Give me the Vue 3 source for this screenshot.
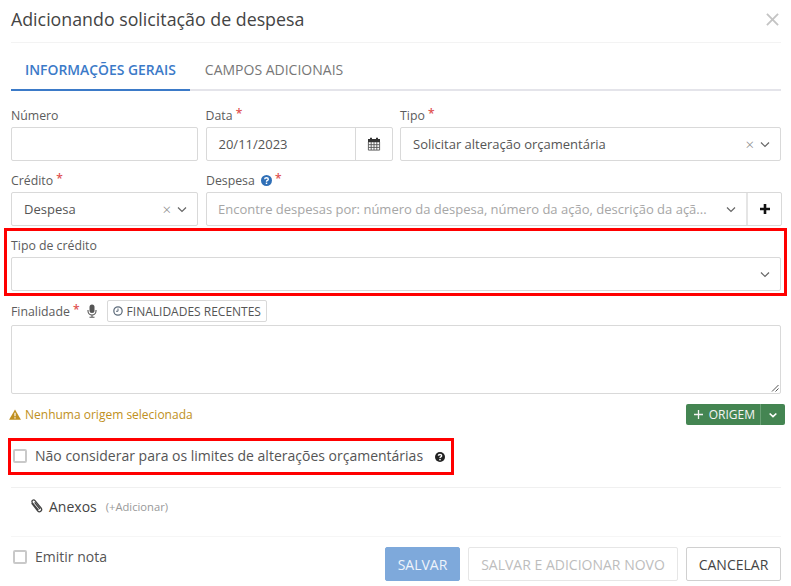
<script setup>
const chevron = "M2 4.5 L6 8.5 L10 4.5";
</script>

<template>
  <div class="modal">
    <header class="head">
      <h1>Adicionando solicitação de despesa</h1>
      <svg class="close" viewBox="0 0 14 14" width="13" height="13">
        <path d="M1 1 L13 13 M13 1 L1 13" stroke="#c4c4c4" stroke-width="2" fill="none" />
      </svg>
    </header>

    <nav class="tabs">
      <a class="tab active">INFORMAÇÕES GERAIS</a>
      <a class="tab">CAMPOS ADICIONAIS</a>
    </nav>

    <div class="row row1">
      <div class="field">
        <label>Número</label>
        <div class="box"></div>
      </div>
      <div class="field">
        <label>Data <i class="req">*</i></label>
        <div class="box group">
          <span class="val">20/11/2023</span>
          <span class="addon">
            <svg viewBox="0 0 14 14" width="14" height="14">
              <path fill="#333" d="M1 2h2V.8h2V2h4V.8h2V2h2v3.2H1z" />
              <path fill="none" stroke="#555" stroke-width=".9" d="M1.4 5v8.100h11.200V5M1.4 7.700h11.200M1.4 10.400h11.200M4.200 5v8M7 5v8M9.800 5v8" />
            </svg>
          </span>
        </div>
      </div>
      <div class="field">
        <label>Tipo <i class="req">*</i></label>
        <div class="box select">
          <span class="val">Solicitar alteração orçamentária</span>
          <span class="x">×</span>
          <svg class="chev" viewBox="0 0 12 12" width="12" height="12"><path :d="chevron" /></svg>
        </div>
      </div>
    </div>

    <div class="row row2">
      <div class="field">
        <label>Crédito <i class="req">*</i></label>
        <div class="box select">
          <span class="val">Despesa</span>
          <span class="x">×</span>
          <svg class="chev" viewBox="0 0 12 12" width="12" height="12"><path :d="chevron" /></svg>
        </div>
      </div>
      <div class="field">
        <label>Despesa
          <svg class="help" viewBox="0 0 12 12" width="11" height="11">
            <circle cx="6" cy="6" r="6" fill="#2f6fb7" />
            <path d="M4 4.6C4 2.5 8 2.5 8 4.6C8 6 6 5.8 6 7.3" stroke="#fff" stroke-width="1.5" fill="none" />
            <rect x="5.2" y="8.3" width="1.6" height="1.6" fill="#fff" />
          </svg>
          <i class="req">*</i></label>
        <div class="box group">
          <span class="val ph">Encontre despesas por: número da despesa, número da ação, descrição da açã...</span>
          <svg class="chev end" viewBox="0 0 12 12" width="12" height="12"><path :d="chevron" /></svg>
          <span class="addon plus">
            <svg viewBox="0 0 12 12" width="12" height="12">
              <path d="M6 1v10M1 6h10" stroke="#111" stroke-width="2.6" fill="none" />
            </svg>
          </span>
        </div>
      </div>
    </div>

    <section class="mark mark-credit">
      <label>Tipo de crédito</label>
      <div class="box select">
        <span class="val"></span>
        <svg class="chev" viewBox="0 0 12 12" width="12" height="12"><path :d="chevron" /></svg>
      </div>
    </section>

    <div class="purpose-head">
      <label>Finalidade <i class="req">*</i></label>
      <svg class="mic" viewBox="0 0 10 14" width="10" height="14">
        <rect x="2.5" y="0.5" width="5" height="8.5" rx="2.5" fill="#555" />
        <path d="M1 6v1a4 4 0 0 0 8 0V6M5 11v2M2.5 13.3h5" stroke="#555" stroke-width="1.1" fill="none" />
      </svg>
      <button class="recent">
        <svg viewBox="0 0 12 12" width="10" height="10">
          <circle cx="6" cy="6" r="5" stroke="#5d6b7a" stroke-width="1.5" fill="none" />
          <path d="M6 3v3.3H3.6" stroke="#5d6b7a" stroke-width="1.2" fill="none" />
        </svg>
        FINALIDADES RECENTES
      </button>
    </div>
    <div class="box area">
      <svg class="grip" viewBox="0 0 8 8" width="8" height="8">
        <path d="M1 7.5L7.5 1M4.5 7.5L7.5 4.5" stroke="#555" stroke-width="1" />
      </svg>
    </div>

    <div class="origin">
      <span class="warn">
        <svg viewBox="0 0 14 13" width="12" height="11">
          <path d="M7 0.5L14 12.8H0z" fill="#c09021" />
          <path d="M7 4.5v4.2M7 9.8v1.5" stroke="#fff" stroke-width="1.4" />
        </svg>
        Nenhuma origem selecionada
      </span>
      <div class="origin-btn">
        <span class="main">
          <svg viewBox="0 0 9 9" width="9" height="9">
            <path d="M4.5 0v9M0 4.5h9" stroke="#f4f4f4" stroke-width="1.3" fill="none" />
          </svg>
          ORIGEM
        </span>
        <span class="caret">
          <svg viewBox="0 0 12 12" width="10" height="10">
            <path d="M2 4.2L6 8L10 4.2" stroke="#fff" stroke-width="2" fill="none" />
          </svg>
        </span>
      </div>
    </div>

    <section class="mark mark-limit">
      <span class="check"></span>
      <span class="check-text">Não considerar para os limites de alterações orçamentárias</span>
      <svg class="q" viewBox="0 0 12 12" width="10" height="10">
        <circle cx="6" cy="6" r="6" fill="#222" />
        <path d="M4 4.6C4 2.5 8 2.5 8 4.6C8 6 6 5.8 6 7.3" stroke="#fff" stroke-width="1.6" fill="none" />
        <rect x="5.1" y="8.3" width="1.8" height="1.7" fill="#fff" />
      </svg>
    </section>

    <div class="attach">
      <svg viewBox="0 0 13 14" width="13" height="14">
        <path d="M1.600 4.200L7.800 12C9.600 14 12.800 11.600 11.200 9.200L5 1.600C3.600 0 1 1.800 2.400 3.800L8.400 11.200M4.600 3.400L10 10" stroke="#444" stroke-width="1.300" fill="none" />
      </svg>
      <span class="attach-name">Anexos</span>
      <span class="attach-add">(+Adicionar)</span>
    </div>

    <footer class="foot">
      <div class="note">
        <span class="check"></span>
        <span class="check-text">Emitir nota</span>
      </div>
      <div class="actions">
        <button class="btn save">SALVAR</button>
        <button class="btn next">SALVAR E ADICIONAR NOVO</button>
        <button class="btn cancel">CANCELAR</button>
      </div>
    </footer>
  </div>
</template>

<style>
html, body {
  margin: 0;
  background: #fff;
}
</style>

<style scoped>
.modal {
  box-sizing: border-box;
  width: 791px;
  height: 586px;
  padding: 0 10px 0 11px;
  overflow: hidden;
  background: #fff;
  color: #555;
  font-family: "Open Sans", "Noto Sans", sans-serif;
  font-size: 13px;
}
.head {
  display: flex;
  align-items: center;
  justify-content: space-between;
  height: 38px;
  padding-bottom: 4px;
  border-bottom: 1px solid #f3f3f3;
}
.head h1 {
  margin: 0;
  font-size: 17.8px;
  font-weight: 400;
  color: #444;
}
.close {
  margin-right: 2px;
}
.tabs {
  display: flex;
  height: 46px;
  border-bottom: 2px solid #e4e4ea;
}
.tab {
  display: flex;
  align-items: center;
  padding: 7px 14px 0;
  height: 39px;
  color: #777;
  font-size: 14px;
}
.tab.active {
  color: #3b7ac8;
  font-size: 13.9px;
  font-weight: 600;
  border-bottom: 2px solid #3b7ac8;
}
.tab + .tab {
  margin-left: 1px;
}
.row {
  display: grid;
}
.row1 {
  grid-template-columns: 187px 187px 381px;
  column-gap: 7.5px;
  margin-top: 17px;
}
.row2 {
  grid-template-columns: 187px 576px;
  column-gap: 8px;
  margin-top: 12px;
}
.field label, .mark-credit label, .purpose-head label {
  display: block;
  height: 19px;
  line-height: 15px;
  font-size: 12.3px;
  font-weight: 500;
  color: #5c5c5c;
}
.req {
  color: #e04f4f;
  font-style: normal;
  font-size: 12px;
  font-weight: 600;
  line-height: 10px;
  vertical-align: 2px;
}
.help {
  margin: 0 3px;
  vertical-align: -1px;
}
.box {
  box-sizing: border-box;
  height: 34px;
  border: 1px solid #d9d9d9;
  border-radius: 2px;
  background: #fff;
  display: flex;
  align-items: center;
  font-size: 13px;
}
.val {
  flex: 1;
  padding-left: 12px;
  color: #555;
  white-space: nowrap;
  overflow: hidden;
}
.ph {
  padding-left: 11px;
  color: #a6a6a6;
}
.group .val {
  min-width: 0;
}
.addon {
  box-sizing: border-box;
  flex: none;
  display: flex;
  align-items: center;
  justify-content: center;
  width: 37px;
  height: 100%;
  border-left: 1px solid #d9d9d9;
}
.plus {
  width: 35px;
  border-left-width: 2px;
  border-left-color: #e5e5e5;
}
.x {
  color: #888;
  font-size: 15px;
  font-weight: 300;
  line-height: 1;
  margin-right: 5px;
}
.chev {
  fill: none;
  stroke: #666;
  stroke-width: 1.2;
  margin-right: 9px;
  flex: none;
}
.chev.end {
  margin: 0 9px 0 8px;
}
.mark {
  border: 3px solid #f00;
  box-sizing: border-box;
}
.mark-credit {
  height: 68px;
  margin: 2px -6px 0 -7px;
  padding: 7px 3px 0 4px;
}
.purpose-head {
  display: flex;
  align-items: center;
  height: 22px;
  padding: 4px 0 3px;
}
.purpose-head label {
  height: 19px;
  line-height: 19px;
  margin-right: 7px;
}
.mic {
  margin-right: 10px;
}
.recent {
  display: flex;
  align-items: center;
  gap: 4px;
  height: 22px;
  padding: 0 5px;
  border: 1px solid #d9d9d9;
  border-radius: 2px;
  background: #fff;
  color: #555;
  font-family: inherit;
  font-size: 12px;
}
.area {
  position: relative;
  height: 69px;
}
.grip {
  position: absolute;
  right: 1px;
  bottom: 1px;
}
.origin {
  display: flex;
  align-items: center;
  justify-content: space-between;
  height: 21px;
  margin: 10px -4px 0 -2px;
}
.warn {
  display: flex;
  align-items: center;
  gap: 4px;
  color: #c09021;
  font-size: 12px;
}
.origin-btn {
  display: flex;
  height: 21px;
  border-radius: 2px;
  background: #448552;
  color: #f4f4f4;
  font-size: 12px;
  font-weight: 500;
  line-height: 20px;
}
.origin-btn .main {
  display: flex;
  align-items: center;
  gap: 6px;
  padding: 0 5px 0 8px;
  border-right: 1px solid #6aa176;
}
.caret {
  display: flex;
  align-items: center;
  padding: 0 7px;
}
.mark-limit {
  display: flex;
  align-items: center;
  width: 446px;
  height: 37px;
  margin: 13px 0 0 -3px;
  padding: 0 0 2px 2px;
}
.check {
  flex: none;
  box-sizing: border-box;
  width: 14px;
  height: 14px;
  border: 2px solid #c9c9c9;
  border-radius: 2px;
  background: #fff;
}
.check-text {
  margin-left: 8px;
  font-size: 14px;
  color: #555;
  white-space: nowrap;
}
.q {
  margin: 2px 0 0 12px;
}
.attach {
  display: flex;
  align-items: center;
  height: 36px;
  margin-top: 12px;
  padding: 0 0 12px 19px;
  border-top: 1px solid #f0f0f0;
  border-bottom: 1px solid #f6f6f6;
}
.attach-name {
  margin-left: 6px;
  font-size: 14px;
  color: #444;
}
.attach-add {
  margin-left: 9px;
  font-size: 11.2px;
  color: #999;
}
.foot {
  display: flex;
  justify-content: space-between;
  margin-top: 10px;
}
.note {
  display: flex;
  align-items: center;
  height: 19px;
  padding-left: 2px;
}
.actions {
  display: flex;
  gap: 8px;
}
.btn {
  box-sizing: border-box;
  height: 34px;
  padding: 0;
  border: 1px solid #e6e6e6;
  border-radius: 2px;
  background: #fff;
  font-family: inherit;
  font-size: 14px;
}
.save {
  width: 75px;
  border-color: #7ea9db;
  background: #7ea9db;
  color: #eef4fb;
}
.next {
  width: 210px;
  color: #bdbdbd;
}
.cancel {
  width: 95px;
  border-color: #d0d0d0;
  color: #444;
}
</style>
